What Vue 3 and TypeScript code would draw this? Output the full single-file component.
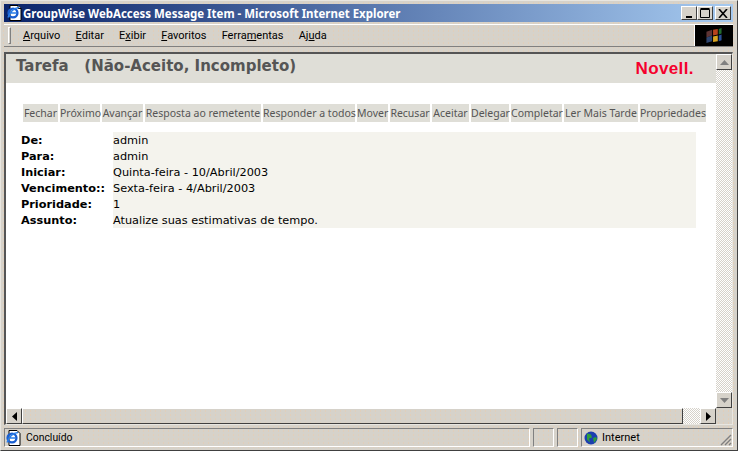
<script setup lang="ts">
const menus: [string, string, string][] = [
  ['', 'A', 'rquivo'],
  ['', 'E', 'ditar'],
  ['E', 'x', 'ibir'],
  ['', 'F', 'avoritos'],
  ['Ferra', 'm', 'entas'],
  ['Aj', 'u', 'da'],
]
const actions = ['Fechar', 'Próximo', 'Avançar', 'Resposta ao remetente', 'Responder a todos', 'Mover', 'Recusar', 'Aceitar', 'Delegar', 'Completar', 'Ler Mais Tarde', 'Propriedades']
const fields: [string, string][] = [
  ['De:', 'admin'],
  ['Para:', 'admin'],
  ['Iniciar:', 'Quinta-feira - 10/Abril/2003'],
  ['Vencimento::', 'Sexta-feira - 4/Abril/2003'],
  ['Prioridade:', '1'],
  ['Assunto:', 'Atualize suas estimativas de tempo.'],
]
</script>

<template>
  <div class="window">
    <header class="titlebar">
      <svg class="app-icon" width="16" height="16" viewBox="0 0 16 16">
        <path d="M4 .5h8l3 3v12H4z" fill="#fff" stroke="#000" />
        <path d="M12 .5v3h3" fill="#ccc" stroke="#000" />
        <circle cx="7" cy="8" r="4.4" fill="none" stroke="#1a5fd0" stroke-width="2.4" />
        <path d="M3.5 8h7M2 12.5C4 7 8 3 13 2.5" fill="none" stroke="#2a7ee8" stroke-width="1.4" />
      </svg>
      <span class="title">GroupWise WebAccess Message Item - Microsoft Internet Explorer</span>
      <div class="caption-buttons">
        <button class="cap"><svg width="10" height="10"><rect x="2" y="8" width="6" height="2" fill="#000" /></svg></button>
        <button class="cap"><svg width="10" height="10"><path d="M.5 1.5h9v8h-9zM.5 .5h9" fill="none" stroke="#000" /></svg></button>
        <button class="cap close"><svg width="10" height="9"><path d="M1 0l8 9M9 0L1 9" stroke="#000" stroke-width="1.6" /></svg></button>
      </div>
    </header>

    <nav class="menubar">
      <i class="gripper"></i>
      <ul class="menu">
        <li v-for="m in menus" :key="m[0] + m[1] + m[2]">{{ m[0] }}<u>{{ m[1] }}</u>{{ m[2] }}</li>
      </ul>
      <div class="flag">
        <svg width="20" height="17" viewBox="0 0 20 18">
          <path d="M2 5l6-2v6l-6 2z" fill="#5e3434" />
          <path d="M2 11l6-2v6l-6 2z" fill="#2f4670" />
          <path d="M9 3l5-1v6l-5 1z" fill="#b8431c" />
          <path d="M15 2l3-1v6l-3 1z" fill="#236b2e" />
          <path d="M9 10l5-1v6l-5 1z" fill="#d9a520" />
          <path d="M15 9l3-1v6l-3 1z" fill="#2a4f96" />
        </svg>
      </div>
    </nav>

    <div class="viewport">
      <div class="view-main">
        <main class="page">
          <div class="band">
            <h1>Tarefa&nbsp;&nbsp; (Não-Aceito, Incompleto)</h1>
            <span class="novell">Novell.</span>
          </div>
          <div class="actions">
            <a v-for="a in actions" :key="a">{{ a }}</a>
          </div>
          <dl class="fields">
            <template v-for="f in fields" :key="f[0]">
              <dt>{{ f[0] }}</dt>
              <dd>{{ f[1] }}</dd>
            </template>
          </dl>
        </main>
        <aside class="vscroll">
          <button class="arrow"><svg width="9" height="5"><path d="M4.5 0L9 5H0z" fill="#808080" /></svg></button>
          <div class="track"></div>
          <button class="arrow"><svg width="9" height="5"><path d="M4.5 5L9 0H0z" fill="#808080" /></svg></button>
        </aside>
      </div>
      <div class="hscroll">
        <button class="arrow"><svg width="5" height="9"><path d="M0 4.5L5 0v9z" fill="#000" /></svg></button>
        <div class="thumb"></div>
        <div class="track htrack"></div>
        <button class="arrow"><svg width="5" height="9"><path d="M5 4.5L0 0v9z" fill="#000" /></svg></button>
        <div class="corner"></div>
      </div>
    </div>

    <footer class="status">
      <div class="pane main-pane">
        <svg width="16" height="16" viewBox="0 0 16 16">
          <path d="M4 .5h8l3 3v12H4z" fill="#fff" stroke="#000" />
          <circle cx="7" cy="8" r="4.4" fill="none" stroke="#1a5fd0" stroke-width="2.4" />
          <path d="M3.5 8h7M2 12.5C4 7 8 3 13 2.5" fill="none" stroke="#2a7ee8" stroke-width="1.4" />
        </svg>
        <span class="done">Concluído</span>
      </div>
      <div class="pane small"></div>
      <div class="pane small"></div>
      <div class="pane zone">
        <svg width="14" height="14" viewBox="0 0 14 14">
          <circle cx="7" cy="7" r="6.5" fill="#1c3fb0" />
          <path d="M3 2.5l4 1 1 3-3 1 1 4-3-3zM9 7l3-1 1 2-3 4z" fill="#2f9e3a" />
        </svg>
        <span>Internet</span>
        <svg class="grip" width="12" height="12"><path d="M11 1L1 11M11 5l-6 6M11 9l-2 2" stroke="#808080" stroke-width="1.4" /></svg>
      </div>
    </footer>
  </div>
</template>

<style scoped>
.window {
  box-sizing: border-box;
  width: 738px;
  height: 451px;
  display: flex;
  flex-direction: column;
  padding: 4px 4px 4px 3px;
  background-color: #d6d2ca;
  background-image: radial-gradient(#e4cdb4 .6px, transparent .7px);
  background-size: 5px 4px;
  border: 1px solid;
  border-color: #e8e6e0 #404040 #404040 #e8e6e0;
  font-family: Roboto, sans-serif;
  font-size: 11px;
  color: #000;
  overflow: hidden;
}
.titlebar {
  height: 18px;
  margin: -1px 0 0 0;
  flex: none;
  display: flex;
  align-items: center;
  padding: 0 2px;
  background: linear-gradient(90deg, #0a246a, #a6caf0);
}
.app-icon { flex: none; margin-right: 1px; }
.title {
  color: #fff;
  font-family: "Noto Sans", sans-serif;
  font-weight: 700;
  font-size: 11.46px;
  white-space: nowrap;
}
.caption-buttons { margin-left: auto; display: flex; }
.cap {
  box-sizing: border-box;
  width: 16px;
  height: 14px;
  padding: 0;
  display: flex;
  align-items: center;
  justify-content: center;
  background: #d6d2ca;
  border: 1px solid;
  border-color: #fff #404040 #404040 #fff;
}
.close { margin-left: 2px; }
.menubar {
  flex: none;
  height: 23px;
  box-sizing: border-box;
  margin-top: 2px;
  display: flex;
  align-items: center;
  border-top: 1px solid #fff;
  border-bottom: 1px solid #808080;
}
.gripper {
  width: 1px;
  height: 15px;
  margin-left: 4px;
  border: 1px solid;
  border-color: #fff #808080 #808080 #fff;
}
.menu {
  list-style: none;
  margin: 0;
  padding: 0 0 0 12px;
  display: flex;
  gap: 15.2px;
}
.menu li { white-space: nowrap; }
.flag {
  margin-left: auto;
  width: 38px;
  height: 21px;
  background: #000;
  border-left: 1px solid #fff;
  display: flex;
  align-items: center;
  justify-content: center;
}
.viewport {
  flex: none;
  margin-top: 5px;
  height: 373px;
  box-sizing: border-box;
  border-style: solid;
  border-color: #555 #e8e6e0 #e8e6e0 #555;
  border-width: 2px 1px 1px 2px;
  display: flex;
  flex-direction: column;
}
.view-main { flex: 1; min-height: 0; display: flex; }
.page { flex: 1; min-width: 0; background: #fff; overflow: hidden; }
.band {
  height: 29px;
  display: flex;
  justify-content: space-between;
  align-items: flex-start;
  background: #dfded7;
}
h1 {
  margin: 3px 0 0 10px;
  font-family: "DejaVu Sans", sans-serif;
  font-size: 15px;
  font-weight: 700;
  color: #555;
  white-space: nowrap;
}
.novell {
  margin: 5px 22px 0 0;
  font-family: "Liberation Sans", sans-serif;
  font-size: 17px;
  line-height: 20px;
  letter-spacing: .4px;
  font-weight: 700;
  color: #f5002d;
}
.actions {
  display: grid;
  grid-template-columns: 35px 40px 41px 116px 92px 31px 40px 37px 38px 51px 74px 66px;
  gap: 2px;
  margin: 21px 0 0 17px;
  width: max-content;
}
.actions a {
  height: 18px;
  line-height: 18px;
  background: #dfded7;
  color: #555;
  text-align: center;
  white-space: nowrap;
  font-family: "Noto Sans", sans-serif;
  font-size: 10.5px;
}
.fields {
  display: grid;
  grid-template-columns: 92px 583px;
  grid-auto-rows: 16px;
  margin: 10px 0 0 15px;
  font-family: "DejaVu Sans", sans-serif;
  font-size: 11.3px;
  line-height: 18px;
}
dt { font-weight: 700; white-space: nowrap; }
dd {
  margin: 0;
  background-color: #f4f3ed;
  white-space: nowrap;
}
.vscroll {
  flex: none;
  width: 16px;
  display: flex;
  flex-direction: column;
}
.arrow {
  box-sizing: border-box;
  flex: none;
  width: 16px;
  height: 16px;
  padding: 0;
  display: flex;
  align-items: center;
  justify-content: center;
  background: #d6d2ca;
  border: 1px solid;
  border-color: #fff #404040 #404040 #fff;
}
.track {
  flex: 1;
  background-color: #fff;
  background-image: conic-gradient(#d6d2ca 25%, #fff 0 50%, #d6d2ca 0 75%, #fff 0);
  background-size: 2px 2px;
}
.hscroll { flex: none; height: 16px; display: flex; }
.thumb {
  width: 661px;
  flex: none;
  box-sizing: border-box;
  background-color: #d6d2ca;
  background-image: radial-gradient(#e4cdb4 .6px, transparent .7px);
  background-size: 5px 4px;
  border: 1px solid;
  border-color: #fff #404040 #404040 #fff;
}
.htrack { flex: 1; }
.corner { width: 16px; flex: none; }
.status {
  flex: none;
  margin-top: 3px;
  height: 19px;
  display: flex;
  gap: 3px;
}
.pane {
  box-sizing: border-box;
  display: flex;
  align-items: center;
  border: 1px solid;
  border-color: #808080 #fff #fff #808080;
}
.main-pane { flex: 1; gap: 5px; }
.done { font-size: 10.4px; }
.small { width: 21px; flex: none; }
.zone {
  position: relative;
  width: 152px;
  flex: none;
  padding-left: 2px;
  gap: 4px;
}
.grip { position: absolute; right: 0; bottom: 0; }
</style>

<style>
html, body { margin: 0; background: #fff; overflow: hidden; }
</style>
